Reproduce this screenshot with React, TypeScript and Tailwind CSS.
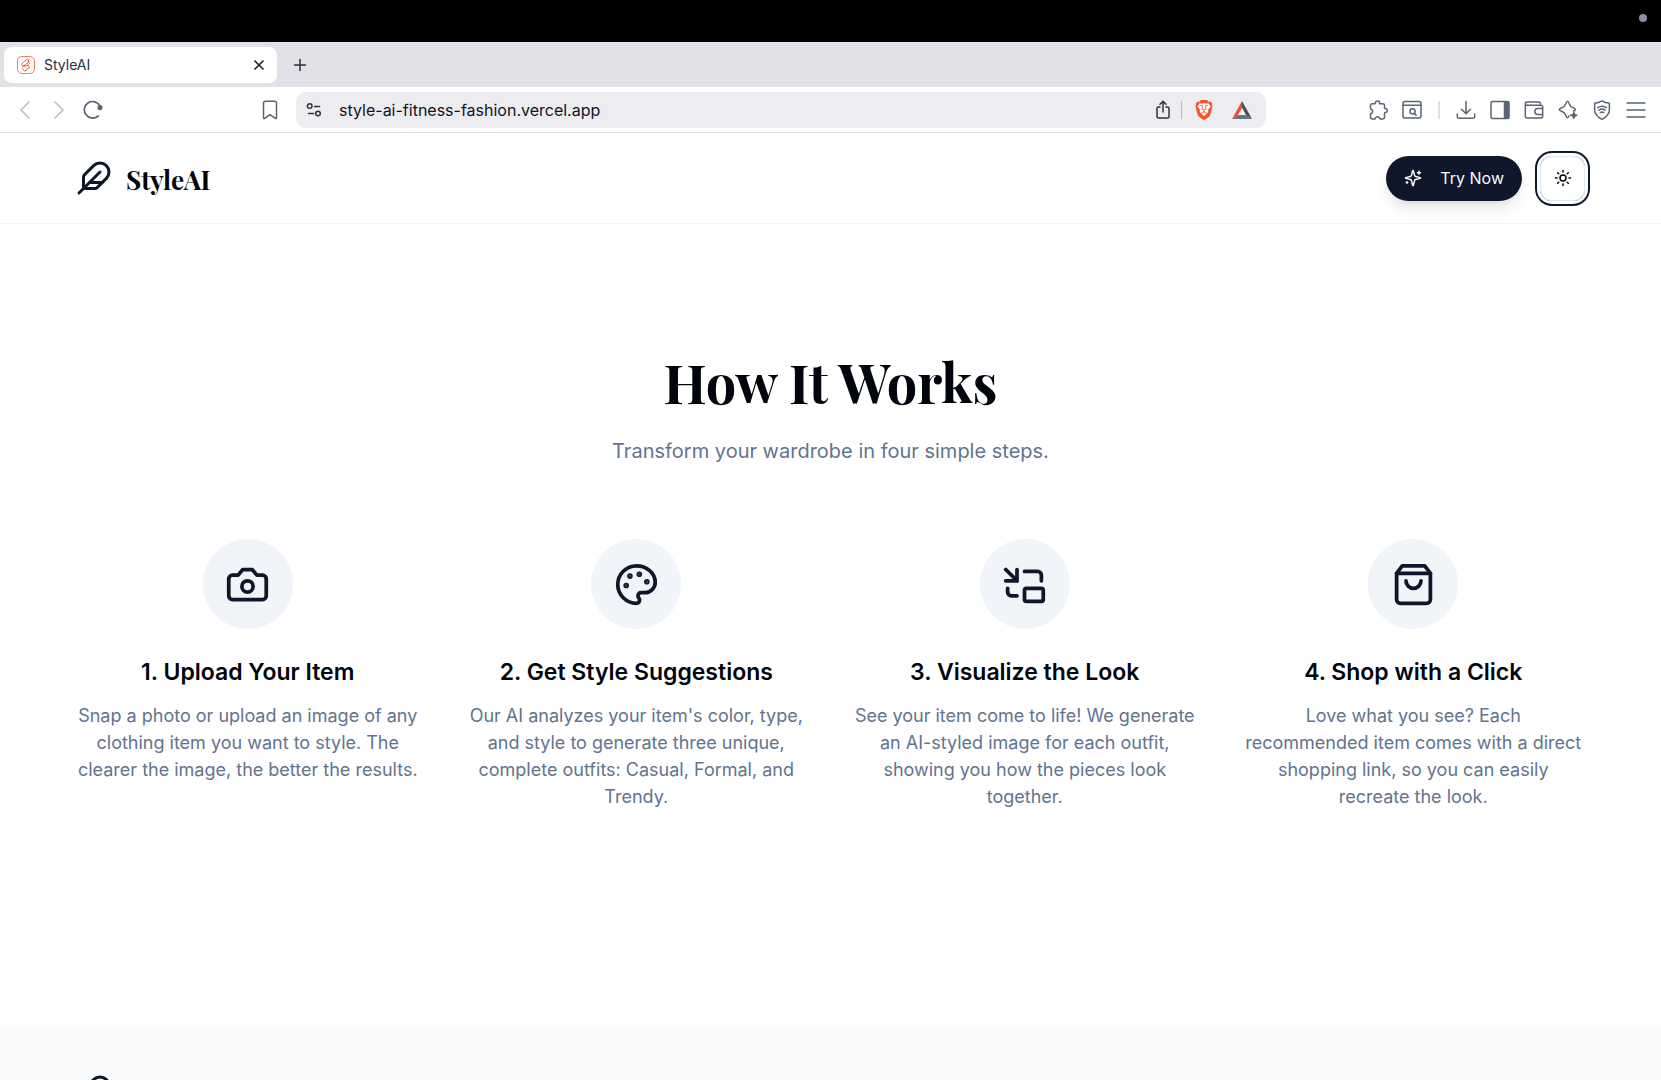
import type { ReactNode } from "react";
import { Feather, PictureInPicture, Sun } from "lucide-react";
import { SiBrave } from "react-icons/si";

type IconProps = { className?: string };

function LineIcon({ className, children }: IconProps & { children: ReactNode }) {
  return (
    <svg
      viewBox="0 0 24 24"
      className={className}
      fill="none"
      stroke="currentColor"
      strokeWidth="2"
      strokeLinecap="round"
      strokeLinejoin="round"
      aria-hidden="true"
    >
      {children}
    </svg>
  );
}

function CameraIcon({ className }: IconProps) {
  return (
    <LineIcon className={className}>
      <path d="M14.5 4h-5L7 7H4a2 2 0 0 0-2 2v9a2 2 0 0 0 2 2h16a2 2 0 0 0 2-2V9a2 2 0 0 0-2-2h-3l-2.5-3z" />
      <circle cx="12" cy="13" r="3" />
    </LineIcon>
  );
}

function PaletteIcon({ className }: IconProps) {
  return (
    <LineIcon className={className}>
      <circle cx="13.5" cy="6.5" r=".5" fill="currentColor" />
      <circle cx="17.5" cy="10.5" r=".5" fill="currentColor" />
      <circle cx="8.5" cy="7.5" r=".5" fill="currentColor" />
      <circle cx="6.5" cy="12.5" r=".5" fill="currentColor" />
      <path d="M12 2C6.5 2 2 6.5 2 12s4.5 10 10 10c.926 0 1.648-.746 1.648-1.688 0-.437-.18-.835-.437-1.125-.29-.289-.438-.652-.438-1.125a1.64 1.64 0 0 1 1.668-1.668h1.996c3.051 0 5.555-2.503 5.555-5.554C21.965 6.012 17.461 2 12 2z" />
    </LineIcon>
  );
}

function BagIcon({ className }: IconProps) {
  return (
    <LineIcon className={className}>
      <path d="M6 2 3 6v14a2 2 0 0 0 2 2h14a2 2 0 0 0 2-2V6l-3-4Z" />
      <path d="M3 6h18" />
      <path d="M16 10a4 4 0 0 1-8 0" />
    </LineIcon>
  );
}

function SparklesIcon({ className }: IconProps) {
  return (
    <LineIcon className={className}>
      <path d="M9.937 15.5A2 2 0 0 0 8.5 14.063l-6.135-1.582a.5.5 0 0 1 0-.962L8.5 9.936A2 2 0 0 0 9.937 8.5l1.582-6.135a.5.5 0 0 1 .963 0L14.063 8.5A2 2 0 0 0 15.5 9.937l6.135 1.581a.5.5 0 0 1 0 .964L15.5 14.063a2 2 0 0 0-1.437 1.437l-1.582 6.135a.5.5 0 0 1-.963 0z" />
      <path d="M20 3v4M22 5h-4M4 17v2M5 18H3" />
    </LineIcon>
  );
}

const steps = [
  {
    icon: CameraIcon,
    title: "1. Upload Your Item",
    text: "Snap a photo or upload an image of any clothing item you want to style. The clearer the image, the better the results.",
  },
  {
    icon: PaletteIcon,
    title: "2. Get Style Suggestions",
    text: "Our AI analyzes your item's color, type, and style to generate three unique, complete outfits: Casual, Formal, and Trendy.",
  },
  {
    icon: PictureInPicture,
    title: "3. Visualize the Look",
    text: "See your item come to life! We generate an AI-styled image for each outfit, showing you how the pieces look together.",
  },
  {
    icon: BagIcon,
    title: "4. Shop with a Click",
    text: "Love what you see? Each recommended item comes with a direct shopping link, so you can easily recreate the look.",
  },
];

function ToolButton({ label, children }: { label: string; children: ReactNode }) {
  return (
    <button type="button" aria-label={label} className="shrink-0">
      <svg
        viewBox="0 0 20 20"
        className="block size-5"
        fill="none"
        stroke="currentColor"
        strokeWidth="1.5"
        strokeLinecap="round"
        strokeLinejoin="round"
      >
        {children}
      </svg>
    </button>
  );
}

function TabStrip() {
  return (
    <div className="flex h-[45px] shrink-0 items-center bg-[#e2e1e7] pl-1">
      <div className="flex h-9 w-[273px] items-center rounded-lg bg-white px-3">
        <svg viewBox="0 0 20 20" className="size-5" fill="none" stroke="#fb7c5c">
          <rect x="1.5" y="1.5" width="17" height="17" rx="4.5" />
          <path
            d="M11.6 3.8 6.4 8.2c-1 1-.8 2.2.3 2.4l5.4.3c1.5.2 1.6 1.4.7 2.2L8.6 16.2M11.6 3.8l.8 1.2M13.4 6.4 8 10.8M6 12.4c.8-.8 2-1.2 3.2-1.3M14 8c-.8.8-1.6 1.3-2.8 2.5M6.5 13.5l2.1 2.7M12.4 5v2.6"
            stroke="#f4512c"
            strokeWidth="0.9"
          />
        </svg>
        <span className="ml-2 flex-1 text-sm text-[#2b2f3b]">StyleAI</span>
        <button type="button" aria-label="Close tab">
          <svg viewBox="0 0 12 12" className="size-3" stroke="#1f2430" strokeWidth="1.7" strokeLinecap="round">
            <path d="m2 2 8 8M10 2l-8 8" />
          </svg>
        </button>
      </div>
      <button type="button" aria-label="New tab" className="ml-4">
        <svg viewBox="0 0 14 14" className="size-3.5" stroke="#2b2f3b" strokeWidth="1.5" strokeLinecap="round">
          <path d="M7 1.5v11M1.5 7h11" />
        </svg>
      </button>
    </div>
  );
}

function Toolbar() {
  return (
    <div className="flex h-[46px] shrink-0 items-center border-b border-[#e0dfe6] bg-white px-[15px] text-[#5b6475]">
      <div className="flex w-[265px] items-center gap-3.5">
        <div className="flex gap-3.5 text-[#b4b9c3]">
          <ToolButton label="Back">
            <path d="M14 2 6 10l8 8" />
          </ToolButton>
          <ToolButton label="Forward">
            <path d="m6 2 8 8-8 8" />
          </ToolButton>
        </div>
        <ToolButton label="Reload">
          <path d="M17 6A8.300 8.300 0 1 0 15.200 16" strokeWidth="1.700" />
          <circle cx="17" cy="7.600" r="1.800" fill="currentColor" />
        </ToolButton>
        <div className="ml-auto flex">
          <ToolButton label="Bookmark">
            <path d="M3.500 3.200c0-1.100.9-2 2-2h9c1.100 0 2 .9 2 2v14.600c0 .7-.7 1-1.200.6L10 14.600l-5.300 3.800c-.5.4-1.200.1-1.200-.6z" />
          </ToolButton>
        </div>
      </div>

      <div className="mr-[102px] ml-4 flex h-9 flex-1 items-center rounded-[10px] bg-[#edecf1] px-2.5 text-[#2b3240]">
        <svg viewBox="0 0 16 16" className="mr-[17px] size-4" fill="none" stroke="currentColor" strokeWidth="1.5" strokeLinecap="round">
          <circle cx="3.7" cy="4" r="2.3" />
          <path d="M8.5 4.500h5" />
          <circle cx="12" cy="11.5" r="2.3" />
          <path d="M2.5 11.500h5" />
        </svg>
        <input
          aria-label="Address"
          readOnly
          value="style-ai-fitness-fashion.vercel.app"
          className="min-w-0 flex-1 text-base text-[#10141f] outline-none"
        />
        <ToolButton label="Share">
          <path d="M7 7H5.500A1.500 1.500 0 0 0 4 8.500v8A1.500 1.500 0 0 0 5.500 18h9a1.500 1.500 0 0 0 1.500-1.500v-8A1.500 1.500 0 0 0 14.500 7H13M10 12V1.500M7 4.300l3-2.900 3 2.900" />
        </ToolButton>
        <span className="mr-3 ml-2 h-[18px] w-px bg-[#b9bac4]" />
        <button type="button" aria-label="Brave Shields" className="text-[#fb542b]">
          <svg viewBox="0 0 20 20" className="size-5">
            <path d="M5 3h10v10l-5 4-5-4z" fill="#fff" />
            <SiBrave size={20} />
          </svg>
        </button>
        <button type="button" aria-label="Rewards" className="mr-1 ml-[18px]">
          <svg viewBox="0 0 20 18" className="h-[18px] w-5">
            <path d="M10 0 0 18 6.2 14 10 7z" fill="#ff4724" />
            <path d="m10 0 10 18-6.2-4L10 7z" fill="#4b4f5c" />
            <path d="M0 18h20l-6.2-4H6.2z" fill="#6b7080" />
            <path d="m10 7 3.8 7H6.2z" fill="#fff" />
          </svg>
        </button>
      </div>

      <div className="flex items-center gap-3.5">
        <ToolButton label="Extensions">
          <path d="M2.500 5.500c0-1 .7-1.700 1.700-1.700h2.500c.6 0 .9-.5.800-1C7.400 1.600 8.300.9 9.500.9s2.100.7 2 1.900c-.1.500.2 1 .8 1h2.500c1 0 1.700.7 1.700 1.700v2.200c0 .6.400.9.900.9 1.200 0 1.900.9 1.900 2s-.7 2-1.900 2c-.5 0-.9.300-.9.900v3.800c0 1-.7 1.700-1.700 1.700h-2.300c-.6 0-.8-.5-1-.9-.3-.8-1-1.300-2-1.300s-1.700.5-2 1.300c-.2.400-.4.900-1 .9H4.200c-1 0-1.700-.7-1.700-1.700v-3c0-.6.400-.8.900-1 .8-.3 1.300-1 1.300-1.900s-.5-1.600-1.300-1.900c-.5-.2-.9-.4-.9-1z" />
        </ToolButton>
        <ToolButton label="Search tabs">
          <rect x="1" y="1.500" width="18" height="16.500" rx="2" />
          <path d="M1 5.200h18M12.400 13.400l1.800 1.800" />
          <circle cx="10.500" cy="11.300" r="2.600" />
        </ToolButton>
        <span className="mx-0.5 h-[18px] w-0.5 bg-[#dfdfe6]" />
        <ToolButton label="Downloads">
          <path d="M10 1.500v12M5.500 9.200l4.500 4.500 4.500-4.500M1.300 14v2.300c0 1.200.8 2 2 2h13.400c1.200 0 2-.8 2-2V14" />
        </ToolButton>
        <ToolButton label="Sidebar">
          <rect x="1" y="1.500" width="18" height="17" rx="1.500" />
          <path d="M14.500 2h4v16h-4z" fill="currentColor" />
        </ToolButton>
        <ToolButton label="Wallet">
          <path d="M16.500 5.300V4c0-1.200-.8-2-2-2H3.300c-1.200 0-2 .8-2 1.700S2 5.300 3.300 5.300h13.400c1.200 0 2 .8 2 2v8.700c0 1.200-.8 2-2 2H3.300c-1.200 0-2-.8-2-2V3.700M18.700 8.500h-4.900a2.900 2.900 0 0 0 0 5.900h4.900z" />
        </ToolButton>
        <ToolButton label="Assistant">
          <path d="M15.500 11.200c1.200-.6 2-1 2-1.700 0-.8-1-1.200-2.200-1.600-2.700-.9-3.200-1.700-4.200-4.400C10.700 2.300 10.300 1.300 9.500 1.300s-1.200 1-1.600 2.200C6.900 6.200 6.400 7 3.700 7.900 2.500 8.300 1.200 8.700 1.200 9.500s1.300 1.300 2.500 1.700c2.700.9 3.200 1.700 4.200 4.400.4 1.200.8 2.200 1.600 2.200.6 0 1-.7 1.500-2M15.800 12.300v6M12.800 15.300h6" />
          <path d="m15.800 13.300 1 1.400 1.600.6-1.600.7-1 1.600-.9-1.600-1.600-.7 1.600-.6z" fill="currentColor" />
        </ToolButton>
        <ToolButton label="VPN">
          <path d="M10 .9c2.300 1.600 4.600 2.200 7.400 2.300v6.300c0 4.500-3.200 7.700-7.400 9.800-4.200-2.100-7.400-5.300-7.400-9.800V3.200C5.400 3.100 7.700 2.500 10 .9zM5.700 7.600c2.700-1.800 5.900-1.800 8.600 0M6.900 10.100c2-1.300 4.200-1.300 6.200 0M8.300 12.500c1.100-.7 2.300-.7 3.400 0" />
        </ToolButton>
        <ToolButton label="Menu">
          <path d="M1 3h18M1 10h18M1 17h18" />
        </ToolButton>
      </div>
    </div>
  );
}

function Logo() {
  return (
    <a href="#" className="flex items-center gap-3.5">
      <Feather className="size-9 text-[#0f172a]" />
      <span className="pt-1 font-['Playfair_Display','Liberation_Serif',serif] text-[26px] leading-9 font-bold">StyleAI</span>
    </a>
  );
}

function Header() {
  return (
    <header className="flex h-[91px] shrink-0 items-center justify-between border-b border-slate-100 px-19">
      <Logo />
      <div className="flex items-center gap-[18px]">
        <button
          type="button"
          className="flex h-[45px] items-center gap-[18px] rounded-full bg-[#0f172a] px-[18px] text-base text-slate-50 shadow-lg shadow-slate-900/10"
        >
          <SparklesIcon className="size-[18px]" />
          Try Now
        </button>
        <button
          type="button"
          aria-label="Toggle theme"
          className="flex size-[45px] items-center justify-center rounded-xl border border-slate-200 ring-2 ring-[#0f172a] ring-offset-3"
        >
          <Sun className="size-[18px]" />
        </button>
      </div>
    </header>
  );
}

export default function App() {
  return (
    <div className="flex h-screen flex-col overflow-hidden bg-white font-['Inter','Liberation_Sans',sans-serif] text-[#01040c]">
      <div className="flex h-[42px] shrink-0 items-start justify-end bg-black p-3.5">
        <span className="size-2 rounded-full bg-[#8b90a5]" />
      </div>
      <TabStrip />
      <Toolbar />
      <Header />

      <main className="shrink-0 px-19 pt-[124px] pb-[217px] text-center">
        <h1 className="font-['Playfair_Display','Liberation_Serif',serif] text-[54px] leading-[68px] font-bold">How It Works</h1>
        <p className="mt-[19px] text-xl leading-8 text-slate-500">Transform your wardrobe in four simple steps.</p>

        <div className="mt-[72px] grid grid-cols-4 gap-[45px]">
          {steps.map(({ icon: Icon, title, text }) => (
            <div key={title} className="flex flex-col items-center">
              <div className="flex size-[90px] items-center justify-center rounded-full bg-slate-100">
                <Icon className="size-[45px] text-[#0f172a]" />
              </div>
              <h2 className="mt-[27px] text-[23px] leading-8 font-semibold">{title}</h2>
              <p className="mt-3.5 text-lg leading-[27px] text-slate-500">{text}</p>
            </div>
          ))}
        </div>
      </main>

      <footer className="shrink-0 bg-[#f9fafc] px-19 py-[45px]">
        <Logo />
      </footer>
    </div>
  );
}
